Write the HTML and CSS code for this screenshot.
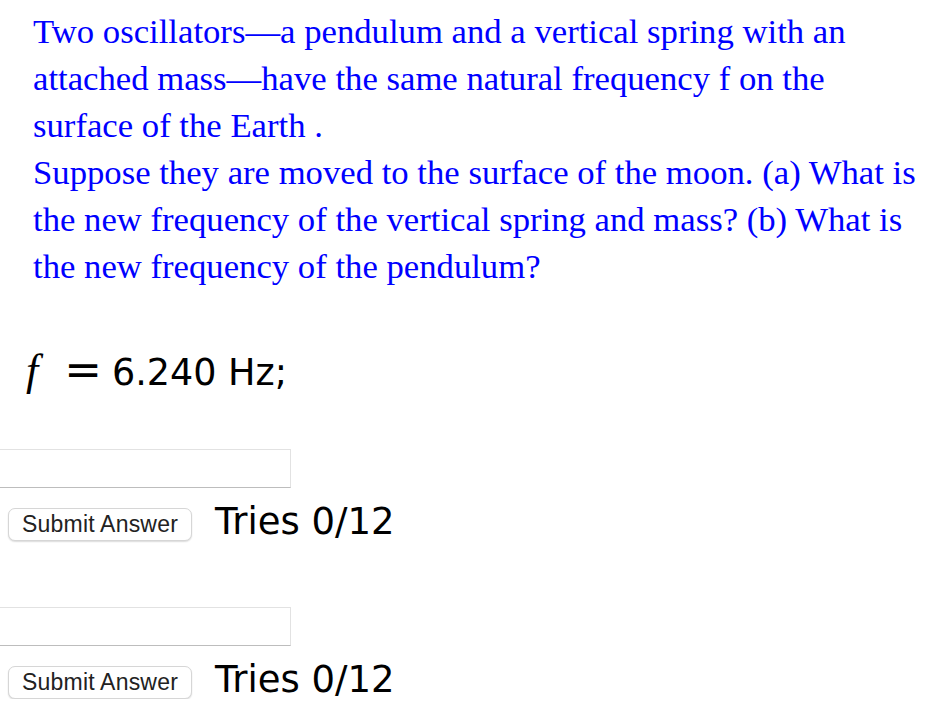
FILE: index.html
```html
<!DOCTYPE html>
<html>
<head>
<meta charset="utf-8">
<link rel="stylesheet" href="styles.css">
</head>
<body>
<div class="page">
  <div class="question">
    <p class="q">Two oscillators—a pendulum and a vertical spring with an<br>attached mass—have the same natural frequency f on the<br>surface of the Earth .</p>
    <p class="q">Suppose they are moved to the surface of the moon. (a) What is<br>the new frequency of the vertical spring and mass? (b) What is<br>the new frequency of the pendulum?</p>
  </div>
  <div class="given"><span class="mi">f</span><span class="eq">=</span><span class="val">6.240 Hz;</span></div>
  <div class="answer first">
    <input class="field" type="text">
    <div class="row"><button class="submit">Submit Answer</button><span class="tries">Tries 0/12</span></div>
  </div>
  <div class="answer">
    <input class="field" type="text">
    <div class="row"><button class="submit">Submit Answer</button><span class="tries">Tries 0/12</span></div>
  </div>
</div>
</body>
</html>
```
FILE: styles.css
```css
html, body {
  margin: 0;
  padding: 0;
  background: #ffffff;
}
.page {
  width: 928px;
}
.question {
  padding: 8px 0 0 33px;
}
.q {
  margin: 0;
  font-family: "Liberation Serif", serif;
  font-size: 34.7px;
  line-height: 47px;
  color: #0000ff;
  white-space: nowrap;
}
.given {
  display: flex;
  align-items: baseline;
  height: 44px;
  margin-top: 58px;
  padding-left: 26px;
  font-family: "DejaVu Sans", Verdana, sans-serif;
  font-size: 36.5px;
  line-height: 44px;
  color: #000;
}
.mi {
  font-family: "Liberation Serif", serif;
  font-style: italic;
  font-size: 44px;
}
.eq {
  margin: 0 10px 0 26px;
  font-family: "DejaVu Sans", sans-serif;
  font-size: 45px;
}
.answer {
  margin-top: 66px;
}
.answer.first {
  margin-top: 57px;
}
.field {
  display: block;
  box-sizing: border-box;
  width: 292px;
  height: 39px;
  margin: 0 0 0 -1px;
  border: 1px solid #e2e2e2;
  border-bottom-color: #bdbdbd;
  background: #fff;
  padding: 0;
}
.row {
  display: flex;
  align-items: flex-start;
  margin-top: 20px;
}
.submit {
  margin-left: 8px;
  width: 184px;
  height: 33px;
  box-sizing: border-box;
  border: 1px solid #d6d6d6;
  border-radius: 7px;
  background: #fff;
  box-shadow: 0 1px 1.5px rgba(0,0,0,0.14);
  font-family: "Liberation Sans", Arial, sans-serif;
  font-size: 23px;
  letter-spacing: 0.2px;
  color: #222;
  padding: 0;
}
.tries {
  margin-left: 23px;
  margin-top: -5px;
  font-family: "DejaVu Sans", Verdana, sans-serif;
  font-size: 37px;
  line-height: 37px;
  color: #000;
}
```
